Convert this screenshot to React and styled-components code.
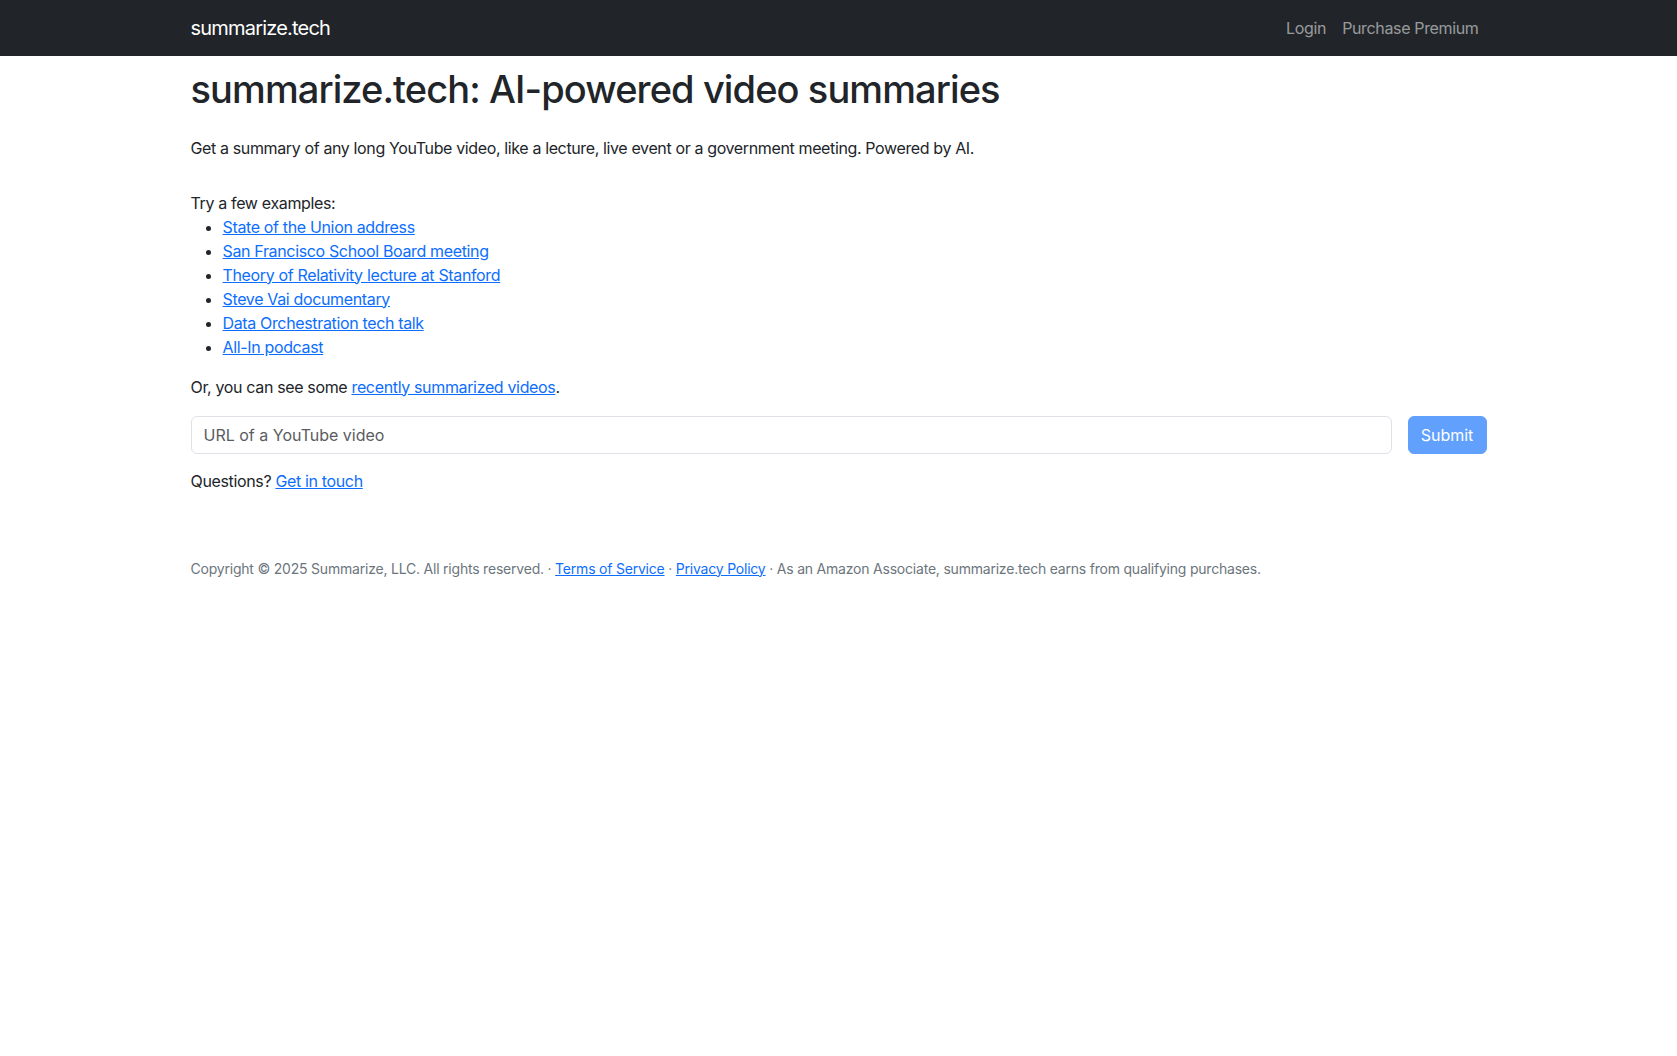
import React from "react"
import styled, { createGlobalStyle } from "styled-components"

const GlobalStyle = createGlobalStyle`
  * { box-sizing: border-box; }
  body {
    margin: 0;
    font-family: Inter, "Noto Sans", "Liberation Sans", sans-serif;
    font-size: 16px;
    line-height: 1.5;
    color: #212529;
    background: #fff;
    letter-spacing: -0.35px;
  }
`

const examples = [
  "State of the Union address",
  "San Francisco School Board meeting",
  "Theory of Relativity lecture at Stanford",
  "Steve Vai documentary",
  "Data Orchestration tech talk",
  "All-In podcast",
]

export default function App() {
  return (
    <>
      <GlobalStyle />
      <Navbar>
        <Container className="nav-inner">
          <Brand href="#">summarize.tech</Brand>
          <NavLinks>
            <NavLink href="#">Login</NavLink>
            <NavLink href="#">Purchase Premium</NavLink>
          </NavLinks>
        </Container>
      </Navbar>
      <Main>
        <Container>
          <Title>summarize.tech: AI-powered video summaries</Title>
          <Lead>
            Get a summary of any long YouTube video, like a lecture, live event or a government meeting. Powered by AI.
          </Lead>
          <Examples>
            <div>Try a few examples:</div>
            <ul>
              {examples.map((ex) => (
                <li key={ex}>
                  <Link href="#">{ex}</Link>
                </li>
              ))}
            </ul>
          </Examples>
          <Text>
            Or, you can see some <Link href="#">recently summarized videos</Link>.
          </Text>
          <SearchForm onSubmit={(e) => e.preventDefault()}>
            <Input placeholder="URL of a YouTube video" />
            <SubmitButton type="submit" disabled>Submit</SubmitButton>
          </SearchForm>
          <Text>
            Questions? <Link href="#">Get in touch</Link>
          </Text>
          <Footer>
            Copyright © 2025 Summarize, LLC. All rights reserved. · <Link href="#">Terms of Service</Link> ·{" "}
            <Link href="#">Privacy Policy</Link> · As an Amazon Associate, summarize.tech earns from qualifying purchases.
          </Footer>
        </Container>
      </Main>
    </>
  )
}

const Container = styled.div`
  max-width: 1320px;
  margin: 0 auto;
  padding: 0 12px;
  &.nav-inner {
    display: flex;
    align-items: center;
    justify-content: space-between;
    height: 100%;
  }
`

const Navbar = styled.nav`
  background: #212529;
  height: 56px;
`

const Brand = styled.a`
  color: #fff;
  font-size: 20px;
  text-decoration: none;
  letter-spacing: -0.8px;
`

const NavLinks = styled.div`
  display: flex;
`

const NavLink = styled.a`
  color: rgba(255, 255, 255, 0.55);
  text-decoration: none;
  padding: 8px;
`

const Main = styled.main`
  padding-top: 11px;
`

const Title = styled.h1`
  font-size: 38px;
  font-weight: 500;
  line-height: 1.2;
  margin: 0 0 23px;
  letter-spacing: -0.9px;
`

const Lead = styled.p`
  margin: 0 0 31px;
  letter-spacing: -0.37px;
`

const Examples = styled.div`
  ul {
    margin: 0 0 16px;
    padding-left: 32px;
  }
`

const Text = styled.p`
  margin: 0 0 17px;
`

const Link = styled.a`
  color: #0d6efd;
  text-decoration: underline;
`

const SearchForm = styled.form`
  display: flex;
  gap: 16px;
  margin-bottom: 15px;
`

const Input = styled.input`
  flex: 1;
  height: 38px;
  padding: 6px 12px;
  font: inherit;
  color: #212529;
  border: 1px solid #dee2e6;
  border-radius: 6px;
  &::placeholder {
    color: #595c5f;
  }
`

const SubmitButton = styled.button`
  width: 79px;
  height: 38px;
  font: inherit;
  color: #fff;
  background: #0d6efd;
  border: 1px solid #0d6efd;
  border-radius: 6px;
  opacity: 0.65;
`

const Footer = styled.footer`
  margin-top: 65px;
  font-size: 14px;
  color: #6c757d;
  letter-spacing: -0.21px;
`
